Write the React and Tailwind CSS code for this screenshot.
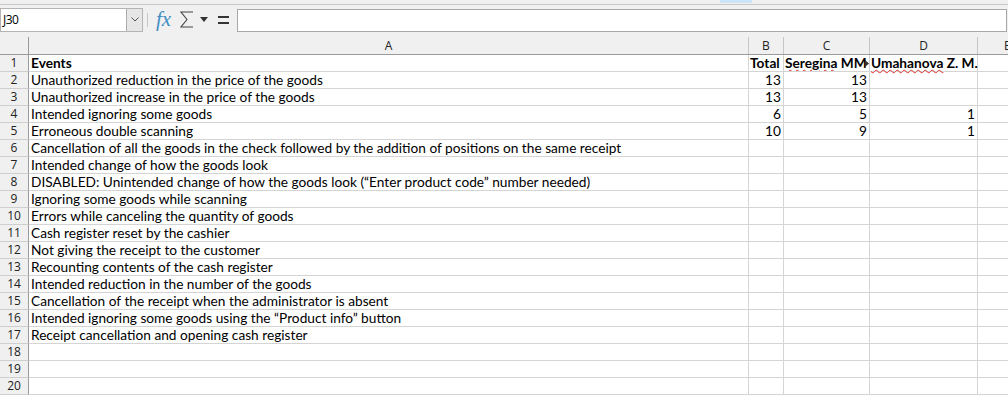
import React from "react";

const rows = [
  { a: "Events", bold: true, b: "Total", c: "Seregina MM", d: "Umahanova Z. M.", header: true },
  { a: "Unauthorized reduction in the price of the goods", b: "13", c: "13" },
  { a: "Unauthorized increase in the price of the goods", b: "13", c: "13" },
  { a: "Intended ignoring some goods", b: "6", c: "5", d: "1" },
  { a: "Erroneous double scanning", b: "10", c: "9", d: "1" },
  { a: "Cancellation of all the goods in the check followed by the addition of positions on the same receipt" },
  { a: "Intended change of how the goods look" },
  { a: "DISABLED: Unintended change of how the goods look (\u201CEnter product code\u201D number needed)" },
  { a: "Ignoring some goods while scanning" },
  { a: "Errors while canceling the quantity of goods" },
  { a: "Cash register reset by the cashier" },
  { a: "Not giving the receipt to the customer" },
  { a: "Recounting contents of the cash register" },
  { a: "Intended reduction in the number of the goods" },
  { a: "Cancellation of the receipt when the administrator is absent" },
  { a: "Intended ignoring some goods using the \u201CProduct info\u201D button" },
  { a: "Receipt cancellation and opening cash register" },
  {},
  {},
  {},
];

const cellFont = { fontFamily: "Lato, 'Liberation Sans', sans-serif" };

export default function App() {
  return (
    <div className="w-[1008px] h-[395px] overflow-hidden bg-[#f0f0f0] flex flex-col">
      {/* top strip */}
      <div className="h-[5px] border-b border-[#c8c8c8] flex">
        <div className="ml-[720px] w-[32px] h-[3px] bg-[#cce4f7]" />
      </div>
      {/* formula bar */}
      <div className="pt-[3px] pb-[5px] flex items-center h-[32px]">
        <div className="w-[143px] h-[24px] bg-white border border-[#b4b4b4] flex items-stretch">
          <div
            className="flex-1 text-[12px] leading-[22px] pl-[2px] text-black"
            style={{ fontFamily: "'Open Sans', sans-serif", letterSpacing: "-0.5px" }}
          >
            J30
          </div>
          <div className="w-[16px] bg-[#e6e6e6] border-l border-[#adadad] flex items-center justify-center">
            <svg width="8" height="5" viewBox="0 0 8 5">
              <path d="M0.5 0.5 L4 4 L7.5 0.5" fill="none" stroke="#555" strokeWidth="1" />
            </svg>
          </div>
        </div>
        <div className="ml-[4px] w-px h-[14px] bg-[#c8c8c8]" />
        <div
          className="ml-[8px] w-[17px] text-[21px] italic text-[#3f8fc4] leading-none"
          style={{ fontFamily: "'Liberation Serif', serif" }}
        >
          fx
        </div>
        <div className="ml-[7px] flex items-center">
          <svg width="14" height="17" viewBox="0 0 14 17">
            <path d="M13 1 H1 L7 8.5 L1 16 H13" fill="none" stroke="#444" strokeWidth="1.1" />
          </svg>
        </div>
        <div className="ml-[6px] flex items-center">
          <svg width="8" height="5" viewBox="0 0 8 5">
            <path d="M0 0 H8 L4 5 Z" fill="#333" />
          </svg>
        </div>
        <div className="ml-[10px] flex items-center">
          <svg width="11" height="10" viewBox="0 0 11 10">
            <rect x="0" y="1" width="11" height="2" fill="#333" />
            <rect x="0" y="7" width="11" height="2" fill="#333" />
          </svg>
        </div>
        <div className="ml-[8px] w-[770px] h-[23px] bg-white border border-[#a8a8a8] self-end" />
      </div>
      {/* column headers */}
      <div
        className="grid grid-cols-[29px_720px_35px_86px_108px_1fr] h-[19px] border-b border-[#9a9a9a] text-[12px] text-[#222]"
        style={{ fontFamily: "'Open Sans', sans-serif" }}
      >
        <div className="border-r border-[#9a9a9a]" />
        {["A", "B", "C", "D", "E"].map((l, i) => (
          <div
            key={l}
            className={`flex items-center justify-center leading-none pt-[2px] ${
              i < 4 ? "border-r border-[#c6c6c6]" : ""
            }`}
          >
            {i === 4 ? <span className="ml-[26px]">{l}</span> : l}
          </div>
        ))}
      </div>
      {/* rows */}
      <div className="bg-white flex-1">
        {rows.map((r, i) => (
          <div
            key={i}
            className="grid grid-cols-[29px_720px_35px_86px_108px_1fr] h-[17px] text-[13.7px] text-black"
          >
            <div
              className="bg-[#f0f0f0] border-r border-b border-r-[#9a9a9a] border-b-[#cfcfcf] text-[12px] text-[#222] flex items-center justify-center leading-none"
              style={{ fontFamily: "'Open Sans', sans-serif" }}
            >
              {i + 1}
            </div>
            <div
              className={`border-r border-b border-[#d4d4d4] pl-[2px] leading-[16px] whitespace-nowrap ${
                r.bold ? "font-bold" : ""
              }`}
              style={cellFont}
            >
              {r.a}
            </div>
            <div
              className={`border-r border-b border-[#d4d4d4] leading-[16px] whitespace-nowrap ${
                r.header ? "font-bold pl-[1px] text-left" : "text-right pr-[2px]"
              }`}
              style={cellFont}
            >
              {r.b}
            </div>
            <div
              className={`relative border-r border-b border-[#d4d4d4] leading-[16px] whitespace-nowrap overflow-hidden ${
                r.header ? "font-bold pl-[1px] text-left" : "text-right pr-[2px]"
              }`}
              style={cellFont}
            >
              {r.header ? (
                <>
                  <span className="underline decoration-wavy decoration-[#e0302a] decoration-1 underline-offset-[1px]">
                    Seregina
                  </span>{" "}
                  MM
                  <svg
                    className="absolute right-0 top-[5px]"
                    width="4"
                    height="7"
                    viewBox="0 0 4 7"
                  >
                    <path d="M0 0 L4 3.5 L0 7 Z" fill="#333" />
                  </svg>
                </>
              ) : (
                r.c
              )}
            </div>
            <div
              className={`border-r border-b border-[#d4d4d4] leading-[16px] whitespace-nowrap ${
                r.header ? "font-bold pl-[1px] text-left" : "text-right pr-[2px]"
              }`}
              style={cellFont}
            >
              {r.header ? (
                <>
                  <span className="underline decoration-wavy decoration-[#e0302a] decoration-1 underline-offset-[1px]">
                    Umahanova
                  </span>{" "}
                  Z. M.
                </>
              ) : (
                r.d
              )}
            </div>
            <div className="border-b border-[#d4d4d4]" />
          </div>
        ))}
      </div>
    </div>
  );
}
